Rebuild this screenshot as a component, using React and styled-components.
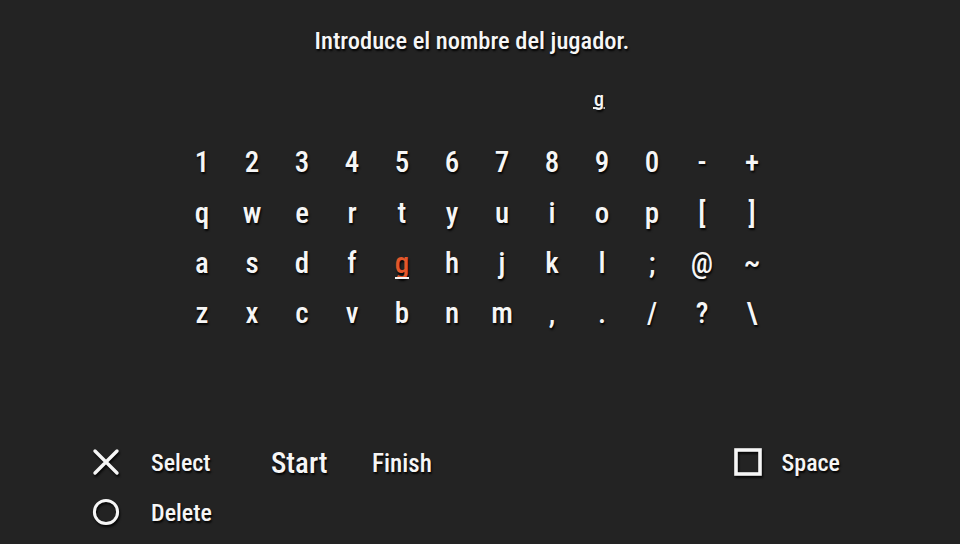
import React from 'react';
import styled, { createGlobalStyle } from 'styled-components';

const GlobalStyle = createGlobalStyle`
  html, body {
    margin: 0;
    padding: 0;
    background: #232323;
  }
  body {
    font-family: "Roboto Condensed", Roboto, "Liberation Sans", sans-serif;
    font-weight: 460;
    color: #f6f6f6;
  }
`;

const Screen = styled.div`
  width: 960px;
  height: 544px;
  background: #232323;
  display: flex;
  flex-direction: column;
  overflow: hidden;
  text-shadow: 1px 2px 2px rgba(0, 0, 0, 0.9);
`;

const Title = styled.div`
  font-size: 24.5px;
  line-height: 28px;
  padding-top: 27px;
  padding-right: 16px;
  text-align: center;
`;

const InputRow = styled.div`
  height: 36px;
  margin-top: 27px;
  padding-left: 593px;
  display: flex;
  align-items: center;
`;

const InputChar = styled.span`
  font-size: 20px;
  border-bottom: 2px solid #f0f0f0;
  line-height: 16px;
  padding: 0 1px;
`;

const Keyboard = styled.div`
  display: grid;
  grid-template-columns: repeat(12, 50px);
  grid-template-rows: 52px 50px 50px 50px;
  margin-top: 18px;
  padding-left: 177px;
`;

const Key = styled.div`
  display: flex;
  align-items: center;
  justify-content: center;
  font-size: 29px;
  color: ${p => (p.$active ? '#e2572b' : '#f6f6f6')};
`;

const KeyGlyph = styled.span`
  position: relative;
  line-height: 1;
  ${p => p.$active && `
    &::after {
      content: '';
      position: absolute;
      left: 0;
      right: 0;
      bottom: -1px;
      height: 2px;
      background: #f4f4f4;
    }
  `}
`;

const Legend = styled.div`
  margin-top: auto;
  padding: 0 120px 6px 92px;
  display: flex;
  flex-direction: column;
`;

const LegendRow = styled.div`
  display: flex;
  align-items: center;
  height: 50px;
`;

const IconSlot = styled.div`
  width: ${p => p.$w || 59}px;
  display: flex;
  align-items: center;
  margin-top: -2px;
  filter: drop-shadow(1px 2px 1px rgba(0, 0, 0, 0.85));
`;

const Label = styled.span`
  font-size: ${p => p.$size || 24}px;
  width: ${p => (p.$w ? `${p.$w}px` : 'auto')};
`;

const Spacer = styled.div`
  flex: 1;
`;

const CrossIcon = () => (
  <svg width="28" height="28" viewBox="0 0 28 28">
    <path d="M3 3 L25 25 M25 3 L3 25" stroke="#f6f6f6" strokeWidth="3.4" strokeLinecap="round" fill="none" />
  </svg>
);

const CircleIcon = () => (
  <svg width="28" height="28" viewBox="0 0 28 28">
    <circle cx="14" cy="14" r="11.6" stroke="#f6f6f6" strokeWidth="3" fill="none" />
  </svg>
);

const SquareIcon = () => (
  <svg width="28" height="28" viewBox="0 0 28 28">
    <rect x="2" y="2" width="24" height="24" stroke="#f6f6f6" strokeWidth="3.6" fill="none" />
  </svg>
);

const rows = ['1234567890-+', 'qwertyuiop[]', 'asdfghjkl;@~', 'zxcvbnm,./?\\'];
const active = 'g';

export default function App() {
  return (
    <Screen>
      <GlobalStyle />
      <Title>Introduce el nombre del jugador.</Title>
      <InputRow>
        <InputChar>g</InputChar>
      </InputRow>
      <Keyboard>
        {rows.map(row =>
          row.split('').map(ch => (
            <Key key={row + ch} $active={ch === active}>
              <KeyGlyph $active={ch === active}>{ch}</KeyGlyph>
            </Key>
          ))
        )}
      </Keyboard>
      <Legend>
        <LegendRow>
          <IconSlot><CrossIcon /></IconSlot>
          <Label $w={120}>Select</Label>
          <Label $w={101} $size={29}>Start</Label>
          <Label $size={25}>Finish</Label>
          <Spacer />
          <IconSlot $w={48}><SquareIcon /></IconSlot>
          <Label>Space</Label>
        </LegendRow>
        <LegendRow>
          <IconSlot><CircleIcon /></IconSlot>
          <Label>Delete</Label>
        </LegendRow>
      </Legend>
    </Screen>
  );
}
